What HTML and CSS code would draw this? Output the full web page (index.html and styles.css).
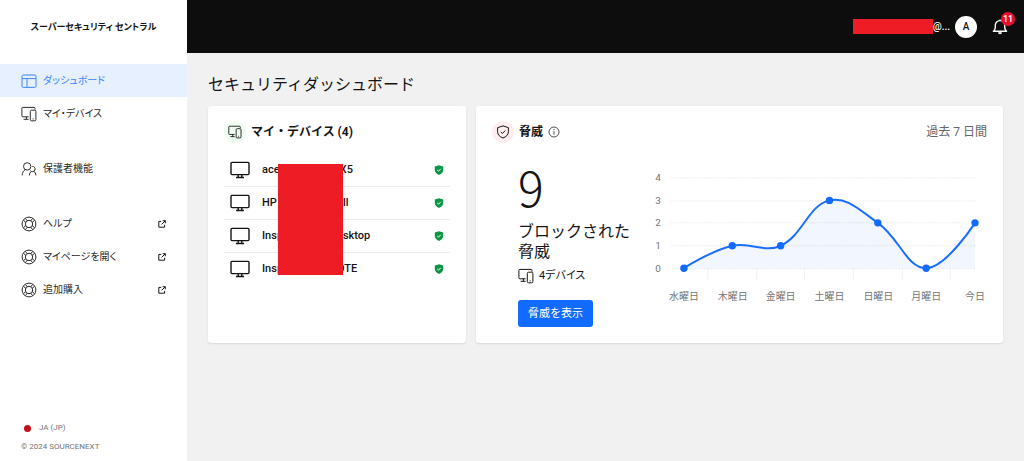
FILE: index.html
```html
<!DOCTYPE html>
<html lang="ja">
<head>
<meta charset="utf-8">
<meta name="viewport" content="width=device-width, initial-scale=1">
<title>セキュリティダッシュボード</title>
<link rel="stylesheet" href="styles.css">
</head>
<body>
<svg class="sprite" aria-hidden="true">
  <symbol id="devices" viewBox="0 0 16 16">
    <path d="M14 3.600V2.400a1 1 0 0 0-1-1H1.900a1 1 0 0 0-1 1v7.400a1 1 0 0 0 1 1H7.600M2.600 13.300h5M5.400 10.800v2.500"/>
    <rect x="9.300" y="4.200" width="5.600" height="10.600" rx="1.200"/>
    <path d="M11.600 12.900h1"/>
  </symbol>
  <symbol id="ring" viewBox="0 0 16 16">
    <circle cx="8" cy="8" r="6.900"/>
    <circle cx="8" cy="8" r="3.700"/>
    <path d="M4.300 2.400L6.400 4.800M2.400 4.300L4.800 6.400M11.700 2.400L9.600 4.800M13.600 4.300L11.200 6.400M4.300 13.600L6.400 11.200M2.400 11.700L4.800 9.600M11.700 13.600L9.600 11.200M13.600 11.700L11.200 9.600"/>
  </symbol>
  <symbol id="external" viewBox="0 0 8 8">
    <path d="M3.200 1.400H.8v5.800h5.800V4.800M4.700.7h2.600v2.600M7.200.8L3.600 4.400"/>
  </symbol>
  <symbol id="monitor" viewBox="0 0 20 18">
    <rect x="1" y="1.400" width="18" height="12.200" rx="1"/>
    <path d="M8.200 13.600v2.600M11.800 13.600v2.600M6 16.500h8"/>
  </symbol>
  <symbol id="safe" viewBox="0 0 10 10">
    <path fill="#0b9444" d="M5 .2L9.200 1.600V5c0 2.300-1.800 4-4.200 4.900C2.600 9 .8 7.300.8 5V1.600z"/>
    <path fill="none" stroke="#fff" d="M3.200 4.900l1.300 1.300 2.300-2.400"/>
  </symbol>
</svg>
<div class="app">
  <aside class="sidebar">
    <div class="brand">スーパーセキュリティ セントラル</div>
    <nav class="nav">
      <div class="nav-group">
        <a class="nav-item active" href="#">
          <svg class="icon" viewBox="0 0 16 16"><rect x="1" y="2" width="14" height="12.400" rx="1.200"/><path d="M1 5.600h14M6 5.600v8.800"/></svg>
          <span>ダッシュボード</span></a>
        <a class="nav-item" href="#"><svg class="icon"><use href="#devices"/></svg><span>マイ・デバイス</span></a>
      </div>
      <div class="nav-group">
        <a class="nav-item" href="#">
          <svg class="icon" viewBox="0 0 16 16"><circle cx="6.200" cy="5.400" r="3.700"/><path d="M1.200 14.400c0-2.800 1.200-4.600 3-5.700M11.200 5.300a2.700 2.700 0 1 1-1.900 4.400M8.400 14.400c.1-2 .9-3.200 2-3.900M12.800 10.400c1.300.8 2 2 2.100 4"/></svg>
          <span>保護者機能</span></a>
      </div>
      <div class="nav-group">
        <a class="nav-item" href="#"><svg class="icon"><use href="#ring"/></svg><span>ヘルプ</span><svg class="out"><use href="#external"/></svg></a>
        <a class="nav-item" href="#"><svg class="icon"><use href="#ring"/></svg><span>マイページを開く</span><svg class="out"><use href="#external"/></svg></a>
        <a class="nav-item" href="#"><svg class="icon"><use href="#ring"/></svg><span>追加購入</span><svg class="out"><use href="#external"/></svg></a>
      </div>
    </nav>
    <footer class="legal">
      <button class="language" type="button"><span class="flag"></span>JA (JP)</button>
      <div>© 2024 SOURCENEXT</div>
    </footer>
  </aside>
  <div class="page">
    <header class="topbar">
      <div class="account"><span class="mask mask-mail"></span><span>@...</span></div>
      <button class="avatar" type="button">A</button>
      <button class="bell" type="button" aria-label="通知">
        <svg viewBox="0 0 16 16"><path d="M1.400 12.200h13.200c-1.400-1.100-1.900-2.200-1.900-4V6.300a4.700 4.700 0 0 0-9.400 0v1.900c0 1.800-.5 2.900-1.900 4zM8 .6v1"/><path class="clapper" d="M6 13.200h4a2 2 0 0 1-4 0z"/></svg>
        <span class="badge">11</span>
      </button>
    </header>
    <main class="content">
      <h1>セキュリティダッシュボード</h1>
      <div class="cards">
        <section class="card">
          <div class="card-head">
            <span class="bubble green"><svg class="small"><use href="#devices"/></svg></span>
            <h2>マイ・デバイス (4)</h2>
          </div>
          <div class="device-area">
            <ul class="devices">
              <li><svg class="monitor"><use href="#monitor"/></svg><span class="start">ace</span><span>iX5</span><svg class="safe"><use href="#safe"/></svg></li>
              <li><svg class="monitor"><use href="#monitor"/></svg><span class="start">HP</span><span>ell</span><svg class="safe"><use href="#safe"/></svg></li>
              <li><svg class="monitor"><use href="#monitor"/></svg><span class="start">Insp</span><span>esktop</span><svg class="safe"><use href="#safe"/></svg></li>
              <li><svg class="monitor"><use href="#monitor"/></svg><span class="start">Insp</span><span>OTE</span><svg class="safe"><use href="#safe"/></svg></li>
            </ul>
            <span class="mask mask-names"></span>
          </div>
        </section>
        <section class="card">
          <div class="card-head">
            <span class="bubble pink"><svg class="small" viewBox="0 0 14 14"><path d="M7 .9l5.400 1.800v4.100c0 3-2.200 5-5.400 6.200C3.800 11.800 1.600 9.800 1.600 6.800V2.700zM4.700 6.900l1.700 1.600 2.900-3"/></svg></span>
            <h2>脅威</h2>
            <svg class="info" viewBox="0 0 12 12"><circle cx="6" cy="6" r="5"/><path d="M6 5.200v3.400M6 3v1.100"/></svg>
            <span class="period">過去 7 日間</span>
          </div>
          <div class="threats">
            <div class="summary">
              <div class="count">9</div>
              <div class="caption">ブロックされた脅威</div>
              <div class="scope"><svg class="icon"><use href="#devices"/></svg><span>4デバイス</span></div>
              <button class="primary" type="button">脅威を表示</button>
            </div>
            <svg class="chart" viewBox="0 0 336 140" role="img" aria-label="過去 7 日間の脅威">
              <path class="grid" d="M19 10H324M19 33H324M19 55H324M19 78H324M19 101H324M56 101V113M105 101V113M153 101V113M202 101V113M251 101V113M299 101V113"/>
              <path class="area" d="M32 100.500C32 100.500 60 82.700 80.500 78C99 73.700 112.600 85.600 129 78C151.600 67.400 156.400 37.600 178 32.500C195.400 28.400 209 42.800 226.500 55C248 70 255.500 100.500 275 100.500C294.500 100.500 324 55 324 55V100.500z"/>
              <path class="line" d="M32 100.500C32 100.500 60 82.700 80.500 78C99 73.700 112.600 85.600 129 78C151.600 67.400 156.400 37.600 178 32.500C195.400 28.400 209 42.800 226.500 55C248 70 255.500 100.500 275 100.500C294.500 100.500 324 55 324 55"/>
              <g class="dots"><circle cx="32" cy="100.500" r="3.700"/><circle cx="80.500" cy="78" r="3.700"/><circle cx="129" cy="78" r="3.700"/><circle cx="178" cy="32.500" r="3.700"/><circle cx="226.500" cy="55" r="3.700"/><circle cx="275" cy="100.500" r="3.700"/><circle cx="324" cy="55" r="3.700"/></g>
              <g class="values"><text x="9" y="13">4</text><text x="9" y="36">3</text><text x="9" y="58">2</text><text x="9" y="81">1</text><text x="9" y="104">0</text></g>
              <g class="days"><text x="32" y="132">水曜日</text><text x="81" y="132">木曜日</text><text x="129" y="132">金曜日</text><text x="178" y="132">土曜日</text><text x="227" y="132">日曜日</text><text x="275" y="132">月曜日</text><text x="324" y="132">今日</text></g>
            </svg>
          </div>
        </section>
      </div>
    </main>
  </div>
</div>
</body>
</html>
```
FILE: styles.css
```css
* { box-sizing: border-box; }
body {
  margin: 0;
  background: #f1f1f1;
  color: #141414;
  font: 10px/16px Roboto, "Noto Sans CJK JP", sans-serif;
}
button { font: inherit; color: inherit; border: 0; background: none; padding: 0; cursor: pointer; }
svg { fill: none; stroke: currentColor; stroke-linejoin: round; flex: none; }
.sprite { position: absolute; width: 0; height: 0; }
.app { display: flex; min-height: 100vh; }

.sidebar { display: flex; flex-direction: column; flex: none; width: 187px; background: #fff; }
.brand {
  padding: 19px 0 29px;
  text-align: center;
  font-size: 9px;
  font-weight: 700;
  font-feature-settings: "palt";
}
.nav { display: grid; gap: 22px; }
.nav-item {
  display: flex;
  align-items: center;
  gap: 6px;
  height: 33px;
  padding: 0 21px;
  color: #2b2b2b;
  font-feature-settings: "palt";
  text-decoration: none;
}
.nav-item.active { background: #e6f0ff; color: #3d86ff; }
.icon { width: 16px; height: 16px; }
.small { width: 14px; height: 14px; }
.out { width: 8px; height: 8px; margin-left: auto; color: #141414; }
.legal { margin-top: auto; padding: 0 21px 6px; color: #737373; font-size: 8px; }
.language { display: flex; align-items: center; gap: 8px; height: 16px; margin-bottom: 3px; padding: 0 3px; }
.flag { width: 7px; height: 7px; border-radius: 50%; background: #c1121c; }

.page { flex: 1; min-width: 0; }
.topbar {
  display: flex;
  align-items: center;
  justify-content: flex-end;
  height: 53px;
  padding-right: 16px;
  background: #0d0d0d;
  color: #fff;
}
.account { display: flex; align-items: center; font-weight: 500; }
.mask { background: #ee1c25; }
.mask-mail { width: 80px; height: 15px; }
.avatar { width: 22px; height: 22px; margin: 0 15px 0 5px; border-radius: 50%; background: #fff; color: #141414; font-weight: 500; }
.bell { position: relative; width: 16px; height: 16px; }
.bell svg { display: block; width: 16px; height: 16px; stroke-width: 1.400; }
.clapper { fill: currentColor; stroke: none; }
.badge {
  position: absolute;
  top: -7px;
  right: -7px;
  width: 14px;
  height: 14px;
  border-radius: 50%;
  background: #e8112d;
  font-size: 9px;
  font-weight: 500;
  line-height: 14px;
}

.content { padding: 20px 21px; }
h1 { margin: 0 0 9px; font-size: 16px; font-weight: 400; line-height: 24px; }
h2 { margin: 0; font-size: 12px; font-weight: 700; }
.cards { display: grid; grid-template-columns: 258fr 527fr; gap: 10px; }
.card { min-height: 237px; padding: 15px 16px; border-radius: 3px; background: #fff; box-shadow: 0 1px 2px #0000001a; }
.card-head { display: flex; align-items: center; gap: 5px; height: 22px; }
.bubble { display: grid; place-items: center; width: 22px; height: 22px; border-radius: 50%; }
.green { background: #effcf2; }
.pink { background: #ffedf0; }
.info { width: 12px; height: 12px; color: #4d4d4d; }
.period { margin-left: auto; color: #666; font-size: 12px; }

.device-area { position: relative; margin-top: 11px; }
.devices { margin: 0; padding: 0; list-style: none; font-size: 11px; font-weight: 500; }
.devices li { display: flex; align-items: center; height: 33px; padding: 0 6px; border-bottom: 1px solid #ececec; }
.devices li:last-child { height: 32px; border: 0; }
.monitor { width: 20px; height: 18px; margin-right: 12px; stroke-width: 1.400; }
.start { width: 75px; }
.safe { width: 10px; height: 10px; margin-left: auto; stroke: none; }
.mask-names { position: absolute; top: 10px; left: 54px; width: 65px; height: 111px; }

.threats { display: grid; grid-template-columns: 160px 1fr; margin-top: 22px; }
.summary { padding: 0 20px 0 26px; }
.count { height: 57px; font: 300 48px/43px "Noto Sans CJK JP", sans-serif; }
.caption { font-size: 16px; line-height: 20px; }
.scope { display: flex; align-items: center; gap: 5px; margin: 6px 0 16px; font-size: 11px; font-feature-settings: "palt"; }
.primary { height: 27px; padding: 0 10px; border-radius: 3px; background: #126bff; color: #fff; font-size: 11px; }
.chart { display: block; width: 100%; margin-top: 3px; overflow: visible; }
.grid { stroke: #ececec; stroke-dasharray: 2 1; shape-rendering: crispEdges; }
.area { fill: #126bff0f; stroke: none; }
.line { stroke: #1a6eff; stroke-width: 2; }
.dots { fill: #126bff; stroke: none; }
.values, .days { fill: #757575; stroke: none; font-size: 10px; }
.values { text-anchor: end; }
.days { text-anchor: middle; }
```
